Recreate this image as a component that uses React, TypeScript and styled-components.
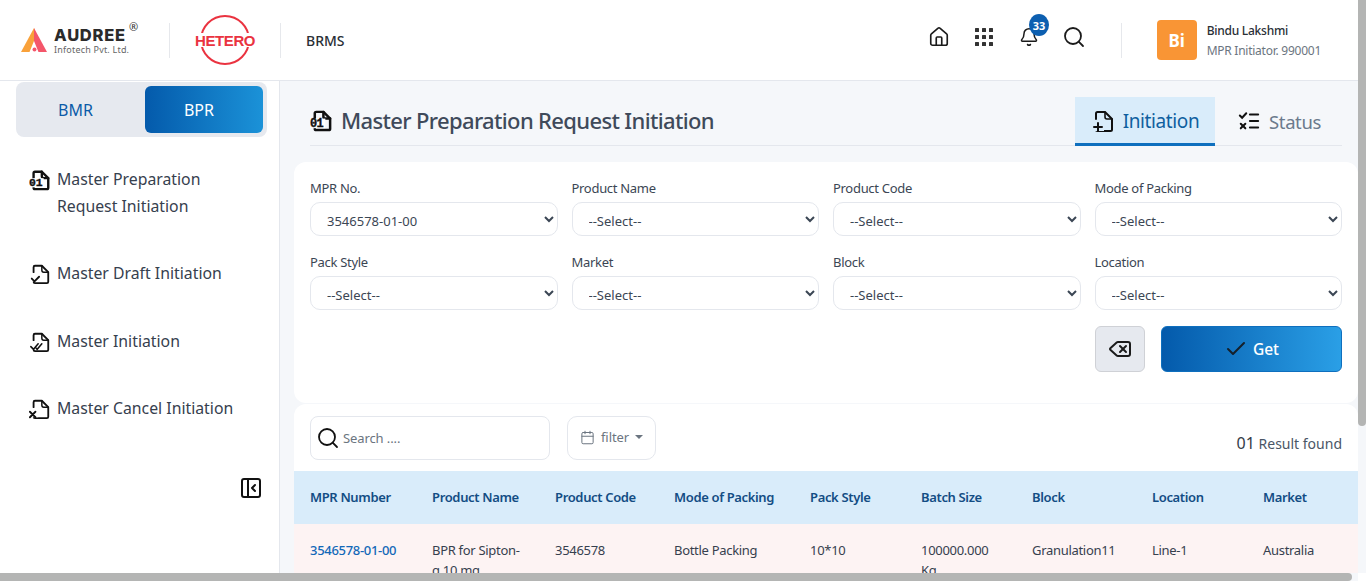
import React from "react";
import styled, { createGlobalStyle } from "styled-components";
import { House, Bell, Search, Calendar, Check, Delete, PanelLeftClose } from "lucide-react";

const FONT = `"Noto Sans", "Open Sans", "Liberation Sans", sans-serif`;

const Global = createGlobalStyle`
  html, body { height: 100%; overflow: hidden; }
  body { margin: 0; font-family: ${FONT}; background: #f5f7fa; color: #3b4654; }
  * { box-sizing: border-box; }
`;

const VerticalTrack = styled.div`
  position: fixed;
  top: 0;
  right: 0;
  bottom: 0;
  width: 8px;
  background: #f5f7fa;
  z-index: 10;
`;

const VerticalThumb = styled.div`
  height: 426px;
  background: #b4b5b4;
  border-radius: 0 0 4px 4px;
`;

const HorizontalTrack = styled.div`
  position: fixed;
  left: 0;
  right: 8px;
  bottom: 0;
  height: 8px;
  background: #f5f7fa;
  z-index: 10;
`;

const HorizontalThumb = styled.div`
  width: 1352px;
  height: 8px;
  background: #b4b5b4;
  border-radius: 0 4px 4px 0;
`;

const Corner = styled.div`
  position: fixed;
  right: 0;
  bottom: 0;
  width: 8px;
  height: 8px;
  background: #fff;
  z-index: 11;
`;

const Page = styled.div`
  width: 1358px;
  height: 581px;
  overflow: hidden;
  display: flex;
  flex-direction: column;
`;

const Header = styled.header`
  height: 81px;
  flex: none;
  background: #fff;
  border-bottom: 1px solid #e4e7ed;
  display: flex;
  align-items: center;
  padding: 0 37px 0 21px;
`;

const AudreeLogo = styled.div`
  display: flex;
  align-items: center;
  gap: 7px;
  width: 148px;
`;

const AudreeText = styled.div`
  display: flex;
  flex-direction: column;
  position: relative;
  margin-top: 2px;
`;

const AudreeName = styled.span`
  font-family: Inter, ${FONT};
  font-weight: 800;
  font-size: 16.5px;
  line-height: 17px;
  color: #2b2b2b;
  letter-spacing: 0.75px;
`;

const Registered = styled.span`
  position: absolute;
  top: -6px;
  left: 75px;
  font-size: 11px;
  line-height: 12px;
  color: #333;
`;

const AudreeSub = styled.span`
  font-size: 9px;
  line-height: 11px;
  color: #666;
  letter-spacing: 0.2px;
`;

const VDivider = styled.div`
  width: 1px;
  height: 35px;
  background: #e6e8ec;
  flex: none;
`;

const HeteroBox = styled.div`
  width: 110px;
  display: flex;
  justify-content: center;
  padding-right: 1px;
`;

const HeteroText = styled.text`
  font-family: "Liberation Sans", ${FONT};
  font-weight: 700;
  font-size: 15px;
  letter-spacing: -0.4px;
  fill: #ea3340;
`;

const AppName = styled.div`
  margin-left: 25px;
  font-size: 14px;
  font-weight: 500;
  color: #2a2f36;
`;

const HeaderIcons = styled.div`
  margin-left: auto;
  display: flex;
  align-items: center;
  color: #1b1b1b;
  margin-right: 24px;
  margin-top: -6px;
`;

const IconSlot = styled.div`
  width: 45px;
  display: flex;
  justify-content: center;
`;

const BellWrap = styled.div`
  position: relative;
  display: flex;
`;

const Badge = styled.span`
  position: absolute;
  top: -13px;
  left: 10px;
  width: 20px;
  height: 22px;
  border-radius: 50%;
  background: #0d5fb0;
  color: #fff;
  font-size: 11px;
  font-weight: 700;
  display: flex;
  align-items: center;
  justify-content: center;
`;

const User = styled.div`
  margin-left: 35px;
  display: flex;
  align-items: center;
  gap: 10px;
`;

const Avatar = styled.div`
  width: 40px;
  height: 40px;
  border-radius: 4px;
  background: #f99535;
  color: #fff;
  font-size: 17px;
  font-weight: 700;
  display: flex;
  align-items: center;
  justify-content: center;
`;

const UserInfo = styled.div`
  display: flex;
  flex-direction: column;
  gap: 5px;
  letter-spacing: -0.25px;
`;

const UserName = styled.span`
  font-size: 12px;
  line-height: 15px;
  font-weight: 500;
  color: #2a2f36;
`;

const UserRole = styled.span`
  font-size: 12px;
  line-height: 15px;
  color: #6b7580;
`;

const Body = styled.div`
  display: flex;
  flex: 1;
  min-height: 0;
`;

const Sidebar = styled.aside`
  width: 280px;
  flex: none;
  background: #fff;
  border-right: 1px solid #e4e7ed;
  padding: 1px 12px 0 16px;
  display: flex;
  flex-direction: column;
`;

const Toggle = styled.div`
  width: 251px;
  height: 55px;
  background: #e6e9ef;
  border-radius: 8px;
  padding: 4px;
  display: flex;
`;

const ToggleItem = styled.div<{ $active?: boolean }>`
  width: ${(p) => (p.$active ? "118px" : "125px")};
  border-radius: 6px;
  display: flex;
  align-items: center;
  justify-content: center;
  font-size: 16px;
  padding-right: ${(p) => (p.$active ? "10px" : "14px")};
  color: ${(p) => (p.$active ? "#fff" : "#0c5ba8")};
  background: ${(p) => (p.$active ? "linear-gradient(90deg, #045aab, #1b92d8)" : "transparent")};
`;

const Nav = styled.nav`
  margin-top: 29px;
  display: flex;
  flex-direction: column;
`;

const NavItem = styled.div<{ $gap: number }>`
  display: flex;
  align-items: flex-start;
  gap: 6px;
  margin-left: 13px;
  margin-bottom: ${(p) => p.$gap}px;
  font-size: 15.8px;
  line-height: 27px;
  color: #36404e;
`;

const NavIcon = styled.span`
  display: flex;
  margin-top: 3px;
  flex: none;
`;

const Collapse = styled.div`
  margin-top: 54px;
  align-self: flex-end;
  display: flex;
  color: #111;
  margin-right: 4px;
`;

const Main = styled.main`
  flex: 1;
  min-width: 0;
  padding-left: 14px;
`;

const TitleBar = styled.div`
  height: 65px;
  margin: 0 16px;
  border-bottom: 1px solid #e4e7ed;
  display: flex;
  align-items: flex-end;
  justify-content: space-between;
`;

const Title = styled.h1`
  margin: 0 0 7px;
  display: flex;
  align-items: center;
  gap: 8px;
  font-size: 22px;
  letter-spacing: -0.65px;
  line-height: 36px;
  font-weight: 500;
  color: #3f4a5a;
`;

const Tabs = styled.div`
  display: flex;
  margin-bottom: -1px;
`;

const Tab = styled.div<{ $active?: boolean }>`
  width: ${(p) => (p.$active ? "140px" : "127px")};
  height: 49px;
  display: flex;
  align-items: center;
  justify-content: center;
  gap: ${(p) => (p.$active ? "8px" : "9px")};
  font-size: ${(p) => (p.$active ? "19px" : "18.5px")};
  letter-spacing: -0.4px;
  background: ${(p) => (p.$active ? "#d9ecfa" : "transparent")};
  color: ${(p) => (p.$active ? "#0f5f9f" : "#6b7a8c")};
  border-bottom: 3px solid ${(p) => (p.$active ? "#0e6fbe" : "transparent")};
  padding: 2px 0 0 ${(p) => (p.$active ? "0" : "2px")};
`;

const FilterCard = styled.section`
  margin-top: 16px;
  height: 241px;
  background: #fff;
  border-radius: 12px;
  padding: 16px 16px 0;
`;

const FilterGrid = styled.div`
  display: grid;
  grid-template-columns: repeat(4, 1fr);
  column-gap: 14px;
  row-gap: 16px;
`;

const Field = styled.label`
  display: flex;
  flex-direction: column;
  gap: 4px;
  font-size: 13px;
  letter-spacing: -0.3px;
  line-height: 20px;
  color: #3b4654;
`;

const Select = styled.select`
  height: 34px;
  width: 100%;
  padding: 4px 8px 0 12px;
  border: 1px solid #e4e7ed;
  border-radius: 10px;
  background: #fff;
  font-family: ${FONT};
  font-size: 13px;
  color: #3b4654;
`;

const Actions = styled.div`
  margin-top: 16px;
  display: flex;
  justify-content: flex-end;
  gap: 16px;
`;

const ClearButton = styled.button`
  width: 50px;
  height: 46px;
  border: 1px solid #cfd1d6;
  border-radius: 6px;
  background: #e6e9ef;
  color: #1b1b1b;
  display: flex;
  align-items: center;
  justify-content: center;
  padding: 0;
`;

const GetButton = styled.button`
  width: 181px;
  height: 46px;
  border: 1px solid #0e6fbe;
  border-radius: 6px;
  background: linear-gradient(90deg, #045aab, #2a9fe6);
  color: #fff;
  font-family: ${FONT};
  font-size: 15.5px;
  font-weight: 500;
  display: flex;
  align-items: center;
  justify-content: center;
  gap: 5px;
  padding: 0;
  svg { color: #15202b; }
`;

const ResultCard = styled.section`
  margin-top: 1px;
  background: #fff;
  border-radius: 12px 12px 0 0;
  padding-top: 12px;
`;

const Toolbar = styled.div`
  height: 55px;
  padding: 0 16px;
  display: flex;
  align-items: flex-start;
  gap: 17px;
`;

const SearchBox = styled.div`
  width: 240px;
  height: 44px;
  border: 1px solid #e4e7ed;
  border-radius: 8px;
  display: flex;
  align-items: center;
  gap: 3px;
  padding: 0 5px;
  font-size: 13px;
  letter-spacing: -0.1px;
  color: #6b7580;
  svg { color: #111; }
`;

const FilterButton = styled.div`
  width: 89px;
  height: 44px;
  border: 1px solid #e4e7ed;
  border-radius: 10px;
  display: flex;
  align-items: center;
  padding: 0 0 2px 12px;
  gap: 6px;
  font-size: 13px;
  letter-spacing: -0.1px;
  color: #6b7580;
`;

const Caret = styled.span`
  width: 0;
  height: 0;
  border-left: 4px solid transparent;
  border-right: 4px solid transparent;
  border-top: 4px solid #6b7580;
`;

const ResultCount = styled.div`
  margin: 17px 0 0 auto;
  font-size: 14px;
  line-height: 20px;
  color: #4a5666;
`;

const CountNum = styled.span`
  font-size: 16px;
  color: #333c48;
`;

const Table = styled.table`
  width: 1064px;
  table-layout: fixed;
  border-collapse: collapse;
`;

const Th = styled.th<{ $w: number }>`
  width: ${(p) => p.$w}px;
  height: 53px;
  background: #d9ecfa;
  text-align: left;
  padding: 0 0 2px 16px;
  font-size: 13px;
  letter-spacing: -0.35px;
  font-weight: 600;
  color: #134d84;
`;

const Td = styled.td`
  background: #fdf3f3;
  vertical-align: top;
  padding: 16px 16px 16px 16px;
  font-size: 13px;
  letter-spacing: -0.3px;
  line-height: 20px;
  color: #36404e;
`;

const LinkCell = styled(Td)`
  font-weight: 500;
  color: #1268b8;
`;

const IconNum = styled.text`
  font-family: "Liberation Mono", monospace;
  font-weight: 700;
  font-size: 12.5px;
  fill: #111;
`;

function DocIcon({ size = 22, solid, children }: { size?: number; solid?: boolean; children?: React.ReactNode }) {
  return (
    <svg width={size} height={size} viewBox="0 0 24 24" fill="none" stroke="#111" strokeWidth={solid ? 2.6 : 2} strokeLinecap="round" strokeLinejoin="round">
      <path d="M5 10V4.5A1.5 1.5 0 0 1 6.5 3H14l7 7v10.5a1.5 1.5 0 0 1-1.5 1.5H6.5A1.5 1.5 0 0 1 5 20.5" />
      <path d="M14 3v5a2 2 0 0 0 2 2h5" strokeWidth={solid ? 2.6 : 1.6} />
      {children}
    </svg>
  );
}

const File01 = ({ size }: { size?: number }) => (
  <DocIcon size={size} solid>
    <rect x="0" y="10" width="16" height="10" fill="#fff" stroke="none" />
    <IconNum x="0" y="19" stroke="#111" strokeWidth={0.4}>01</IconNum>
  </DocIcon>
);

const FileCheck = () => (
  <DocIcon>
    <rect x="1" y="12" width="12" height="8" fill="#fff" stroke="none" />
    <path d="M3 17l3 3 5-5" />
  </DocIcon>
);

const FileDoubleCheck = () => (
  <DocIcon>
    <rect x="1" y="12" width="14" height="8" fill="#fff" stroke="none" />
    <path d="M2 17l3 3 5-6M8 19l1 1 5-6" strokeWidth={1.7} />
  </DocIcon>
);

const FileCross = () => (
  <DocIcon>
    <rect x="0" y="12" width="10" height="9" fill="#fff" stroke="none" />
    <path d="M1 15l6 6M7 15l-6 6" />
  </DocIcon>
);

const FilePlus = () => (
  <DocIcon size={24}>
    <rect x="1" y="13" width="12" height="9" fill="#d9ecfa" stroke="none" />
    <path d="M3 18h8M7 14v8" />
  </DocIcon>
);

const StatusIcon = () => (
  <svg width="22" height="22" viewBox="0 0 24 24" fill="none" stroke="#111" strokeWidth="2.2" strokeLinecap="round">
    <path d="M2 6l2.5 2.5L9 3.5M13 5h9M13 12h9M13 19h9" />
    <path d="M3 15l5 5M8 15l-5 5" />
  </svg>
);

const GridIcon = () => (
  <svg width="18" height="18" viewBox="0 0 18 18" fill="#333">
    {[0, 7, 14].flatMap((y) =>
      [0, 7, 14].map((x) => <rect key={`${x}-${y}`} x={x} y={y} width="4" height="4" rx="0.5" />)
    )}
  </svg>
);

const cols: [string, number][] = [
  ["MPR Number", 122],
  ["Product Name", 123],
  ["Product Code", 119],
  ["Mode of Packing", 136],
  ["Pack Style", 111],
  ["Batch Size", 111],
  ["Block", 120],
  ["Location", 111],
  ["Market", 111],
];

const fields = [
  ["MPR No.", "3546578-01-00"],
  ["Product Name", "--Select--"],
  ["Product Code", "--Select--"],
  ["Mode of Packing", "--Select--"],
  ["Pack Style", "--Select--"],
  ["Market", "--Select--"],
  ["Block", "--Select--"],
  ["Location", "--Select--"],
];

export default function App() {
  return (
    <>
      <Global />
      <Page>
        <Header>
          <AudreeLogo>
            <svg width="26" height="24" viewBox="0 0 26 24">
              <path d="M13 0L0 24h8.5L13 13l1.5-9z" fill="#f9a13a" />
              <path d="M13 0l13 24h-8.5L13 13z" fill="#f4566a" />
              <circle cx="13.5" cy="21.5" r="2" fill="#f4566a" />
            </svg>
            <AudreeText>
              <AudreeName>AUDREE</AudreeName>
              <Registered>®</Registered>
              <AudreeSub>Infotech Pvt. Ltd.</AudreeSub>
            </AudreeText>
          </AudreeLogo>
          <VDivider />
          <HeteroBox>
            <svg width="66" height="52" viewBox="0 0 66 52">
              <circle cx="33" cy="26" r="24" fill="none" stroke="#ea3340" strokeWidth="2" />
              <rect x="0" y="19" width="66" height="14" fill="#fff" />
              <HeteroText x="3" y="31.5">HETERO</HeteroText>
            </svg>
          </HeteroBox>
          <VDivider />
          <AppName>BRMS</AppName>
          <HeaderIcons>
            <IconSlot><House size={22} strokeWidth={1.8} /></IconSlot>
            <IconSlot><GridIcon /></IconSlot>
            <IconSlot>
              <BellWrap>
                <Bell size={20} strokeWidth={1.8} />
                <Badge>33</Badge>
              </BellWrap>
            </IconSlot>
            <IconSlot><Search size={24} strokeWidth={1.8} /></IconSlot>
          </HeaderIcons>
          <VDivider />
          <User>
            <Avatar>Bi</Avatar>
            <UserInfo>
              <UserName>Bindu Lakshmi</UserName>
              <UserRole>MPR Initiator. 990001</UserRole>
            </UserInfo>
          </User>
        </Header>
        <Body>
          <Sidebar>
            <Toggle>
              <ToggleItem>BMR</ToggleItem>
              <ToggleItem $active>BPR</ToggleItem>
            </Toggle>
            <Nav>
              <NavItem $gap={40}>
                <NavIcon><File01 /></NavIcon>
                <span>Master Preparation<br />Request Initiation</span>
              </NavItem>
              <NavItem $gap={41}>
                <NavIcon><FileCheck /></NavIcon>
                <span>Master Draft Initiation</span>
              </NavItem>
              <NavItem $gap={40}>
                <NavIcon><FileDoubleCheck /></NavIcon>
                <span>Master Initiation</span>
              </NavItem>
              <NavItem $gap={0}>
                <NavIcon><FileCross /></NavIcon>
                <span>Master Cancel Initiation</span>
              </NavItem>
            </Nav>
            <Collapse><PanelLeftClose size={24} strokeWidth={2} /></Collapse>
          </Sidebar>
          <Main>
            <TitleBar>
              <Title><File01 size={23} />Master Preparation Request Initiation</Title>
              <Tabs>
                <Tab $active><FilePlus />Initiation</Tab>
                <Tab><StatusIcon />Status</Tab>
              </Tabs>
            </TitleBar>
            <FilterCard>
              <FilterGrid>
                {fields.map(([label, value]) => (
                  <Field key={label}>
                    {label}
                    <Select defaultValue={value}>
                      <option>{value}</option>
                    </Select>
                  </Field>
                ))}
              </FilterGrid>
              <Actions>
                <ClearButton><Delete size={24} strokeWidth={2} /></ClearButton>
                <GetButton><Check size={24} strokeWidth={2} />Get</GetButton>
              </Actions>
            </FilterCard>
            <ResultCard>
              <Toolbar>
                <SearchBox><Search size={24} strokeWidth={1.8} />Search ....</SearchBox>
                <FilterButton><Calendar size={15} strokeWidth={1.6} />filter<Caret /></FilterButton>
                <ResultCount><CountNum>01</CountNum> Result found</ResultCount>
              </Toolbar>
              <Table>
                <thead>
                  <tr>{cols.map(([h, w]) => <Th key={h} $w={w}>{h}</Th>)}</tr>
                </thead>
                <tbody>
                  <tr>
                    <LinkCell>3546578-01-00</LinkCell>
                    <Td>BPR for Sipton-g 10 mg</Td>
                    <Td>3546578</Td>
                    <Td>Bottle Packing</Td>
                    <Td>10*10</Td>
                    <Td>100000.000 Kg</Td>
                    <Td>Granulation11</Td>
                    <Td>Line-1</Td>
                    <Td>Australia</Td>
                  </tr>
                </tbody>
              </Table>
            </ResultCard>
          </Main>
        </Body>
      </Page>
      <VerticalTrack><VerticalThumb /></VerticalTrack>
      <HorizontalTrack><HorizontalThumb /></HorizontalTrack>
      <Corner />
    </>
  );
}
